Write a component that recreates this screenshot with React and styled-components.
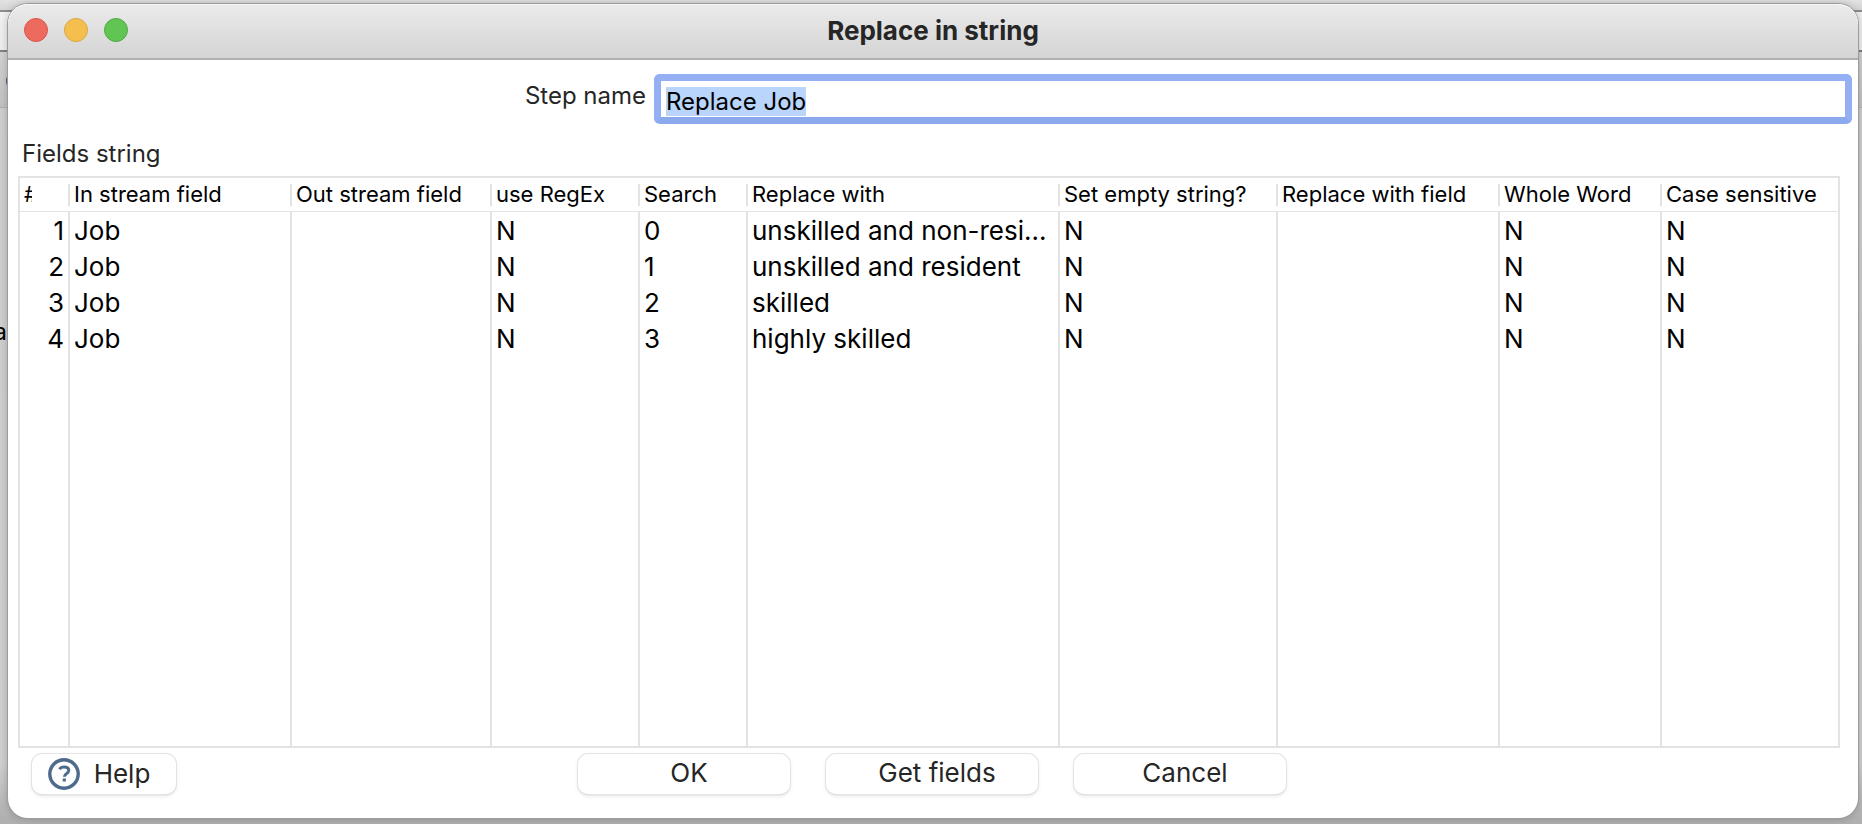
import React, { useEffect, useRef } from "react";
import styled, { createGlobalStyle } from "styled-components";

const GlobalStyle = createGlobalStyle`
  *, *::before, *::after { box-sizing: border-box; }
  body {
    margin: 0;
    font-family: Inter, "Liberation Sans", sans-serif;
    color: #000;
  }
`;

const Desktop = styled.div`
  position: relative;
  display: flex;
  min-height: 100vh;
  padding: 4px 4px 6px 8px;
  overflow: hidden;
  background: linear-gradient(
    #e2e2e2 0, #d6d6d6 10px, #8c8c8c 10px, #8c8c8c 12px,
    #f1f1f1 12px, #ededed 50px, #808080 50px, #808080 52px,
    #d2d2d2 52px, #c2c2c2 107px, #b2b2b2 107px, #b2b2b2 108px,
    #cecece 108px, #d0d0d0 calc(100% - 60px), #b0b0b0 calc(100% - 6px), #b0b0b0 100%
  );
`;

const BackgroundIcon = styled.span`
  position: absolute;
  top: 77px;
  left: 6px;
  width: 8px;
  height: 8px;
  border-radius: 2px;
  background: #4d6684;
`;

const BackgroundText = styled.span`
  position: absolute;
  top: 316px;
  right: calc(100% - 7px);
  font-size: 24px;
  line-height: 32px;
`;

const Dialog = styled.main`
  position: relative;
  flex: 1;
  display: flex;
  flex-direction: column;
  min-width: 0;
  border-radius: 20px;
  background: #fff;
  box-shadow: 0 0 0 1px #9c9c9c, 0 0 8px rgba(0, 0, 0, 0.25);
`;

const TitleBar = styled.header`
  display: grid;
  grid-template-columns: 1fr auto 1fr;
  align-items: center;
  height: 56px;
  padding: 0 16px 2px;
  border-bottom: 2px solid #b0b0b0;
  border-radius: 20px 20px 0 0;
  background: linear-gradient(#ebebeb, #d4d4d4);
  box-shadow: inset 0 1px 0 #f6f6f6;
`;

const TrafficLights = styled.div`
  display: flex;
  gap: 16px;
`;

const Light = styled.button`
  width: 24px;
  height: 24px;
  padding: 0;
  border: 1px solid ${(p) => p.$edge};
  border-radius: 50%;
  background: ${(p) => p.$fill};
`;

const Title = styled.h1`
  margin: 0;
  padding-top: 2px;
  color: #262626;
  font-size: 26px;
  font-weight: 700;
  line-height: 32px;
`;

const Body = styled.form`
  flex: 1;
  display: flex;
  flex-direction: column;
  padding: 14px 18px 24px 10px;
`;

const NameRow = styled.div`
  display: grid;
  grid-template-columns: 628px 1fr;
  column-gap: 8px;
  margin-right: -12px;
`;

const NameLabel = styled.label`
  padding-top: 5px;
  text-align: right;
  color: #262626;
  font-size: 24px;
  line-height: 34px;
`;

const NameInput = styled.input`
  width: 100%;
  height: 50px;
  padding: 5px 5px 0;
  border: 7px solid #94aff3;
  border-bottom-color: #8ca9ee;
  border-radius: 6px;
  outline: none;
  background: #fff;
  color: #000;
  font: 24px/32px Inter, "Liberation Sans", sans-serif;
  &::selection { background: #b9d5fb; color: #000; }
`;

const TableLabel = styled.div`
  padding: 13px 0 5px 4px;
  color: #262626;
  font-size: 24px;
  line-height: 34px;
`;

const TableFrame = styled.div`
  flex: 1;
  display: grid;
`;

const Table = styled.table`
  width: 100%;
  height: 100%;
  table-layout: fixed;
  border: 2px solid #e3e3e3;
  border-collapse: separate;
  border-spacing: 0;
`;

const HeadCell = styled.th`
  height: 34px;
  padding: 0;
  border-bottom: 1px solid #e3e3e3;
  text-align: left;
  font-size: 22px;
  font-weight: 400;
  line-height: 20px;
  white-space: nowrap;
`;

const HeadLabel = styled.span`
  display: block;
  height: 22px;
  padding-left: 4px;
  border-right: ${(p) => (p.$last ? "0" : "2px solid #e3e3e3")};
`;

const Clip = styled.span`
  display: block;
  width: 8px;
  overflow: hidden;
`;

const Cell = styled.td`
  height: ${(p) => (p.$fill ? "auto" : "36px")};
  padding: ${(p) => (p.$fill ? "0" : "2px 4px 0")};
  border-right: ${(p) => (p.$last ? "0" : "2px solid #e3e3e3")};
  text-align: ${(p) => (p.$number ? "right" : "left")};
  font-size: 26px;
  line-height: 34px;
  white-space: nowrap;
`;

const Footer = styled.footer`
  display: grid;
  grid-template-columns: 1fr auto 1fr;
  padding: 6px 8px 0 14px;
`;

const Actions = styled.div`
  display: flex;
  gap: 36px;
`;

const PushButton = styled.button`
  display: flex;
  align-items: center;
  justify-content: center;
  gap: 14px;
  justify-self: start;
  width: ${(p) => (p.$small ? "144px" : "212px")};
  height: 40px;
  padding: ${(p) => (p.$small ? "0 10px 0 0" : "0 0 2px 10px")};
  border: 0;
  border-radius: 10px;
  background: #fff;
  box-shadow: 0 0 0 1px #e4e4e4, 0 1px 1px 0 #b8b8b8, 0 2px 4px rgba(0, 0, 0, 0.1);
  color: #262626;
  font: 26px/36px Inter, "Liberation Sans", sans-serif;
`;

const columns = [
  { label: "#", width: 50 },
  { label: "In stream field", width: 222 },
  { label: "Out stream field", width: 200 },
  { label: "use RegEx", width: 148 },
  { label: "Search", width: 108 },
  { label: "Replace with", width: 312 },
  { label: "Set empty string?", width: 218 },
  { label: "Replace with field", width: 222 },
  { label: "Whole Word", width: 162 },
  { label: "Case sensitive" },
];

const rows = [
  ["1", "Job", "", "N", "0", "unskilled and non-resi...", "N", "", "N", "N"],
  ["2", "Job", "", "N", "1", "unskilled and resident", "N", "", "N", "N"],
  ["3", "Job", "", "N", "2", "skilled", "N", "", "N", "N"],
  ["4", "Job", "", "N", "3", "highly skilled", "N", "", "N", "N"],
];

const last = columns.length - 1;

function HelpIcon() {
  return (
    <svg width="32" height="32" viewBox="0 0 32 32" fill="none" stroke="#4e6b8b" aria-hidden="true">
      <circle cx="16" cy="16" r="14.2" strokeWidth="3.4" />
      <path d="M11.5 11.2C12.5 9.6 14 9 16 9c2.800 0 4.800 1.400 4.800 3.600 0 2.800-4.500 2.900-4.500 6.200" strokeWidth="3" />
      <path d="M14.700 22h3.200" strokeWidth="3" />
    </svg>
  );
}

export default function App() {
  const nameRef = useRef(null);

  useEffect(() => {
    nameRef.current.focus();
    nameRef.current.select();
  }, []);

  return (
    <>
      <GlobalStyle />
      <Desktop>
        <BackgroundIcon />
        <BackgroundText>a</BackgroundText>
        <Dialog>
          <TitleBar>
            <TrafficLights>
              <Light aria-label="Close" $fill="#ed6a5e" $edge="#d9564c" />
              <Light aria-label="Minimize" $fill="#f5bf4f" $edge="#dba640" />
              <Light aria-label="Zoom" $fill="#61c554" $edge="#50ab43" />
            </TrafficLights>
            <Title>Replace in string</Title>
          </TitleBar>
          <Body onSubmit={(e) => e.preventDefault()}>
            <NameRow>
              <NameLabel htmlFor="step-name">Step name</NameLabel>
              <NameInput id="step-name" ref={nameRef} defaultValue="Replace Job" />
            </NameRow>
            <TableLabel id="fields-label">Fields string</TableLabel>
            <TableFrame>
              <Table aria-labelledby="fields-label">
                <colgroup>
                  {columns.map((c) => (
                    <col key={c.label} width={c.width} />
                  ))}
                </colgroup>
                <thead>
                  <tr>
                    {columns.map((c, i) => (
                      <HeadCell key={c.label} scope="col">
                        <HeadLabel $last={i === last}>
                          {i === 0 ? <Clip>{c.label}</Clip> : c.label}
                        </HeadLabel>
                      </HeadCell>
                    ))}
                  </tr>
                </thead>
                <tbody>
                  {rows.map((row) => (
                    <tr key={row[0]}>
                      {row.map((value, i) => (
                        <Cell key={i} $number={i === 0} $last={i === last}>
                          {value}
                        </Cell>
                      ))}
                    </tr>
                  ))}
                  <tr aria-hidden="true">
                    {columns.map((c, i) => (
                      <Cell key={c.label} $fill $last={i === last} />
                    ))}
                  </tr>
                </tbody>
              </Table>
            </TableFrame>
            <Footer>
              <PushButton type="button" $small>
                <HelpIcon />
                Help
              </PushButton>
              <Actions>
                <PushButton type="submit">OK</PushButton>
                <PushButton type="button">Get fields</PushButton>
                <PushButton type="button">Cancel</PushButton>
              </Actions>
            </Footer>
          </Body>
        </Dialog>
      </Desktop>
    </>
  );
}
